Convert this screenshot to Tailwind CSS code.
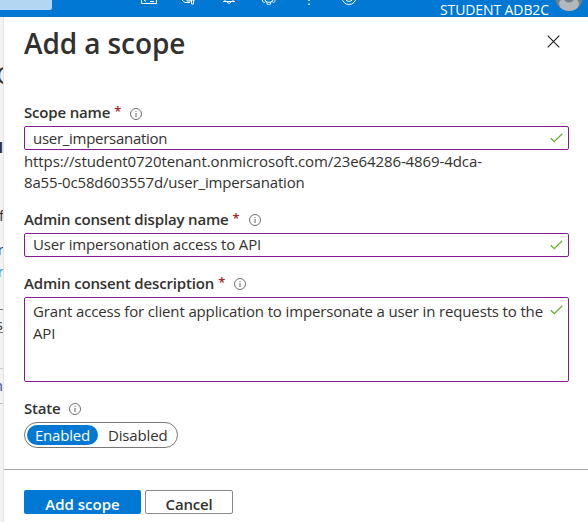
<!DOCTYPE html>
<html lang="en">
<head>
<meta charset="utf-8">
<title>Add a scope</title>
<script src="https://cdn.jsdelivr.net/npm/@tailwindcss/browser@4"></script>
</head>
<body class="w-[588px] h-[522px] overflow-hidden bg-white font-['Open_Sans','Noto_Sans',sans-serif] text-[#323130] text-[15px]">
<svg class="hidden">
  <symbol id="info" viewBox="0 0 12 12"><circle cx="6" cy="6" r="5.500" fill="none" stroke="#605e5c" stroke-width=".9"/><path d="M6 5v4M6 3v1" stroke="#605e5c" stroke-width="1"/></symbol>
  <symbol id="check" viewBox="0 0 13 10"><path d="M.8 5.200 4.300 8.600 12.200.8" fill="none" stroke="#69ad32" stroke-width="1.300"/></symbol>
</svg>
<header class="relative flex h-[17px] bg-[#0078d4] overflow-hidden">
  <div class="w-[52px] h-[10px] bg-[#b3d6f2] rounded-br-[2px]"></div>
  <svg class="absolute left-[130px] top-0" width="240" height="10" fill="none" stroke="#fff" stroke-width="1">
    <path d="M11.500-6V3.500h15V-6M14 0l2 1.500M20 1.500h4"/>
    <path d="M52 0l3 2.500h5M57-2v3h4M61.500-2v6h2v-6M59 0h6"/>
    <path d="M93 1.500h12M95 1V-3M103 1V-3M97 2q2 3 4 0"/>
    <circle cx="139" cy="-2.500" r="4.800"/><path d="M132.500 0v1.500l2 1 1-1 1.500 1v1.800h3.500v-1.800l1.500-1 1.500 1 1.500-1V0" opacity=".85"/>
    <path d="M179 0v1M179 3.500v1.500" stroke-width="1.800" opacity=".8"/>
    <circle cx="219" cy="-2.500" r="7"/><path d="M215-1q4 5 8 0"/>
  </svg>
  <div class="absolute left-[440px] top-0 leading-[20px] text-[14px] tracking-[-0.1px] text-white whitespace-nowrap">STUDENT ADB2C</div>
  <svg class="absolute left-[555px] top-0" width="28" height="12"><circle cx="14" cy="-3" r="14" fill="#6f7f8d"/><ellipse cx="14" cy="4" rx="10" ry="7" fill="#b3b8bd"/><circle cx="14" cy="-3" r="5.500" fill="#6f7f8d"/></svg>
</header>
<main class="flex h-[505px]">
  <aside class="relative w-[4px] shrink-0 overflow-hidden bg-[#f3f3f3] border-r border-[#e4e4e4] text-[15px] leading-[20px]">
    <span class="absolute right-[-12px] top-[48px] text-[24px]">O</span>
    <span class="absolute right-0 top-[120px] font-bold">l</span>
    <span class="absolute right-[-1px] top-[188px]">f</span>
    <span class="absolute right-[-1px] top-[222px] text-[#1f4f91]">r</span>
    <span class="absolute right-[-1px] top-[244px] text-[#3298e0]">r</span>
    <i class="absolute left-0 top-[292px] w-full h-px bg-[#777]"></i>
    <span class="absolute right-0 top-[297px]">s</span>
    <i class="absolute left-0 top-[315px] w-full h-px bg-[#777]"></i>
    <i class="absolute left-0 top-[351px] w-full h-px bg-[#ccc]"></i>
    <span class="absolute right-0 top-[358px] text-[#2b4c96]">h</span>
    <i class="absolute left-0 top-[386px] w-full h-px bg-[#bbb]"></i>
  </aside>
  <section class="flex flex-col w-[584px] bg-white whitespace-nowrap">
    <div class="flex justify-between h-[85px] pl-[20px] pr-[28px] shrink-0">
      <h1 class="h-[36px] mt-[8px] leading-[36px] text-[28px] tracking-[-0.1px] font-semibold">Add a scope</h1>
      <svg class="mt-[18px]" width="13" height="13"><path d="M.7.700 12.300 12.300M12.300.700.700 12.300" stroke="#1b1a19" stroke-width="1.100"/></svg>
    </div>
    <form class="flex flex-col h-[367px] pl-[20px] pr-[19px] shrink-0">
      <label class="flex items-center h-[20px] font-semibold"><span class="tracking-[-0.18px]">Scope name</span><span class="ml-[4px] w-[6px] text-[13px] text-[#a4262c]">*</span><svg class="ml-[10px] mt-[3px]" width="12" height="12"><use href="#info"/></svg></label>
      <div class="flex items-center justify-between h-[24px] mt-[4px] pl-[8px] pr-[5px] border border-[#881798] rounded-[2px]"><span class="tracking-[-0.28px]">user_impersanation</span><svg width="13" height="10"><use href="#check"/></svg></div>
      <div class="h-[43px] mt-px leading-[21px]"><span class="tracking-[-0.1px]">https://student0720tenant.onmicrosoft.com/23e64286-4869-4dca-</span><br><span class="tracking-[-0.16px]">8a55-0c58d603557d/user_impersanation</span></div>
      <label class="flex items-center h-[20px] mt-[15px] font-semibold"><span class="tracking-[-0.16px]">Admin consent display name</span><span class="ml-[4px] w-[6px] text-[13px] text-[#a4262c]">*</span><svg class="ml-[10px] mt-[2px]" width="12" height="12"><use href="#info"/></svg></label>
      <div class="flex items-center justify-between h-[24px] mt-[4px] pl-[8px] pr-[5px] border border-[#881798] rounded-[2px]"><span class="mb-[2px] tracking-[-0.16px]">User impersonation access to API</span><svg width="13" height="10"><use href="#check"/></svg></div>
      <label class="flex items-center h-[20px] mt-[16px] font-semibold"><span class="tracking-[-0.16px]">Admin consent description</span><span class="ml-[4px] w-[6px] text-[13px] text-[#a4262c]">*</span><svg class="ml-[10px] mt-[2px]" width="12" height="12"><use href="#info"/></svg></label>
      <div class="flex justify-between h-[85px] mt-[4px] pl-[8px] pr-[5px] pt-[2px] border border-[#881798] rounded-[2px] leading-[22px]"><div class="tracking-[-0.145px]">Grant access for client application to impersonate a user in requests to the<br>API</div><svg class="mt-[5px] shrink-0" width="13" height="10"><use href="#check"/></svg></div>
      <label class="flex items-center h-[20px] mt-[16px] font-semibold"><span class="tracking-[-0.2px]">State</span><svg class="ml-[9px] mt-[2px]" width="12" height="12"><use href="#info"/></svg></label>
      <div class="flex items-center w-[154px] h-[26px] mt-[4px] pl-[2px] border border-[#7a7876] rounded-full"><span class="flex items-center justify-center w-[71px] h-[20px] rounded-full bg-[#0078d4] text-white"><span class="tracking-[-0.2px]">Enabled</span></span><span class="ml-[10px] tracking-[-0.15px]">Disabled</span></div>
    </form>
    <footer class="flex h-[53px] gap-[4px] px-[20px] pt-[20px] border-t border-[#aaa] shrink-0">
      <button class="w-[117px] h-[24px] pt-[4px] leading-[20px] bg-[#0078d4] text-white font-semibold rounded-[2px]">Add scope</button>
      <button class="w-[88px] h-[24px] pt-[3px] leading-[20px] bg-white border border-[#8a8886] font-semibold tracking-[-0.2px] rounded-[2px]">Cancel</button>
    </footer>
  </section>
</main>
</body>
</html>
